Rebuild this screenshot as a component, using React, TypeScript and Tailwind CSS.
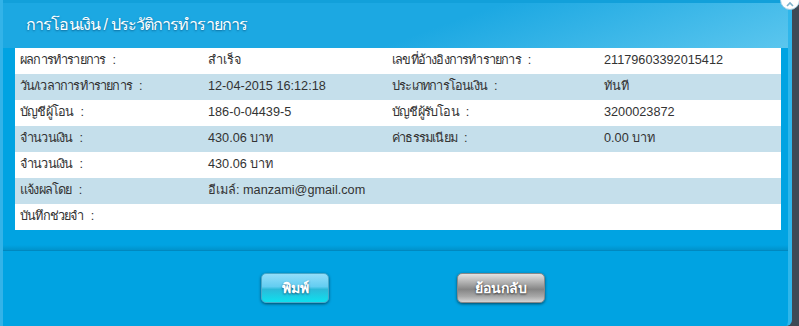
import React from 'react';

const rows: [string, string, string, string][] = [
  ['ผลการทำรายการ', 'สำเร็จ', 'เลขที่อ้างอิงการทำรายการ', '21179603392015412'],
  ['วัน/เวลาการทำรายการ', '12-04-2015 16:12:18', 'ประเภทการโอนเงิน', 'ทันที'],
  ['บัญชีผู้โอน', '186-0-04439-5', 'บัญชีผู้รับโอน', '3200023872'],
  ['จำนวนเงิน', '430.06 บาท', 'ค่าธรรมเนียม', '0.00 บาท'],
  ['จำนวนเงิน', '430.06 บาท', '', ''],
  ['แจ้งผลโดย', 'อีเมล์: manzami@gmail.com', '', ''],
  ['บันทึกช่วยจำ', '', '', ''],
];

function Label({ text }: { text: string }) {
  if (!text) return null;
  return (
    <>
      <span className="tracking-[-0.8px]">{text}</span>
      <span>{'  :'}</span>
    </>
  );
}

export default function App() {
  return (
    <div className="w-[799px] h-[326px] bg-[#3d4a55] flex overflow-hidden font-['Liberation_Sans','Tahoma',sans-serif]">
      {/* Dialog */}
      <div className="relative w-[792px] h-[326px] rounded-br-[6px] bg-[#00a3e2] border-l-[3px] border-l-[#33b3e8] border-r-[4px] border-r-[#2fb6ea] flex flex-col">
        {/* Header */}
        <div className="h-[48px] shrink-0 flex items-start bg-[linear-gradient(160deg,#1ca8e2_0%,#1ca8e2_55%,#5bc6ee_100%)] border-t-[3px] border-t-[#12a0da]">
          <h1 className="ml-[23px] mt-[10px] text-[16px] tracking-[-0.9px] font-normal text-white [text-shadow:0_1px_2px_rgba(0,60,100,0.6)]">
            การโอนเงิน / ประวัติการทำรายการ
          </h1>
        </div>

        {/* Table */}
        <div className="ml-[12px] w-[766px] flex flex-col text-[12.7px] text-[#333]">
          {rows.map((r, i) => (
            <div
              key={i}
              className={`h-[26px] flex items-center whitespace-pre ${i % 2 === 0 ? 'bg-white' : 'bg-[#c5dfeb]'}`}
            >
              <div className="w-[193px] pl-[5px]"><Label text={r[0]} /></div>
              <div className="w-[184px]">{r[1]}</div>
              <div className="w-[212px]"><Label text={r[2]} /></div>
              <div>{r[3]}</div>
            </div>
          ))}
        </div>

        {/* Separator */}
        <div className="mt-[15px] h-[5px] bg-gradient-to-b from-[#00a3e2] to-[#0093cc]" />
        <div className="h-px bg-[#0088bf]" />

        {/* Buttons */}
        <div className="flex pt-[22px] pl-[258px] gap-[128px]">
          <button className="w-[68px] h-[30px] rounded-[5px] bg-[linear-gradient(to_bottom,#93defa_0%,#63cdf1_45%,#2bbad9_55%,#0ee0ef_100%)] shadow-[0_1px_3px_rgba(0,0,0,0.55)] border border-[#4aa8c8] text-white text-[14px] font-bold [text-shadow:0_1px_2px_rgba(0,40,80,0.7)]">
            พิมพ์
          </button>
          <button className="w-[88px] h-[30px] rounded-[5px] bg-[linear-gradient(to_bottom,#e2e2e2_0%,#b0b0b0_30%,#858585_55%,#a8a8a8_80%,#d4d4d4_100%)] shadow-[0_1px_3px_rgba(0,0,0,0.55)] border border-[#888] text-white text-[14px] font-bold [text-shadow:0_1px_2px_rgba(0,0,0,0.7)]">
            ย้อนกลับ
          </button>
        </div>

        {/* Close button peeking at top right */}
        <div className="absolute -top-[10px] -right-[12px] w-[20px] h-[20px] rounded-full bg-white border border-[#9ccde4] flex items-end justify-center pb-[2px]">
          <svg width="8" height="6" viewBox="0 0 8 6">
            <path d="M1 5 L4 2 L7 5" stroke="#7fb3cc" strokeWidth="1.6" fill="none" />
          </svg>
        </div>
      </div>
    </div>
  );
}
